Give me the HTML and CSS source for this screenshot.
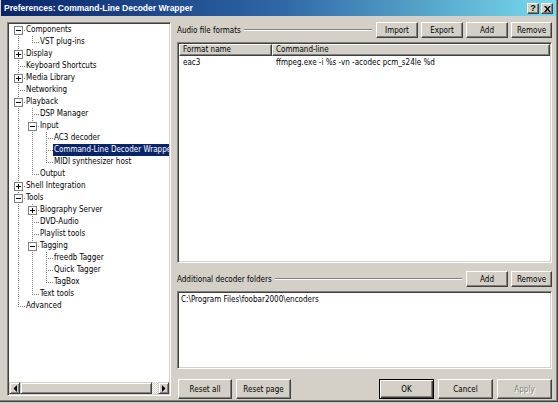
FILE: index.html
```html
<!DOCTYPE html>
<html>
<head>
<meta charset="utf-8">
<link rel="stylesheet" href="styles.css">
</head>
<body>
<div class="window">
  <div class="titlebar">
    <span class="title">Preferences: Command-Line Decoder Wrapper</span>
    <span class="tbtns">
      <span class="tbtn help">?</span>
      <span class="tbtn close"><svg width="7" height="6" viewBox="0 0 7 6"><path d="M0 0h2l1.5 2 1.5-2h2l-2.5 3 2.5 3h-2l-1.5-2-1.5 2h-2l2.5-3z" fill="#000"/></svg></span>
    </span>
  </div>
  <div class="main">
    <div class="tree">
      <div class="tree-items">
        <div class="row"><span class="c first"><span class="box minus"></span></span><span class="lbl">Components</span></div>
        <div class="row"><span class="c pipe"></span><span class="c elbow"></span><span class="lbl">VST plug-ins</span></div>
        <div class="row"><span class="c tee"><span class="box plus"></span></span><span class="lbl">Display</span></div>
        <div class="row"><span class="c tee"></span><span class="lbl">Keyboard Shortcuts</span></div>
        <div class="row"><span class="c tee"><span class="box plus"></span></span><span class="lbl">Media Library</span></div>
        <div class="row"><span class="c tee"></span><span class="lbl">Networking</span></div>
        <div class="row"><span class="c tee"><span class="box minus"></span></span><span class="lbl">Playback</span></div>
        <div class="row"><span class="c pipe"></span><span class="c tee"></span><span class="lbl">DSP Manager</span></div>
        <div class="row"><span class="c pipe"></span><span class="c tee"><span class="box minus"></span></span><span class="lbl">Input</span></div>
        <div class="row"><span class="c pipe"></span><span class="c pipe"></span><span class="c tee"></span><span class="lbl">AC3 decoder</span></div>
        <div class="row"><span class="c pipe"></span><span class="c pipe"></span><span class="c tee"></span><span class="lbl sel">Command-Line Decoder Wrapper</span></div>
        <div class="row"><span class="c pipe"></span><span class="c pipe"></span><span class="c elbow"></span><span class="lbl">MIDI synthesizer host</span></div>
        <div class="row"><span class="c pipe"></span><span class="c elbow"></span><span class="lbl">Output</span></div>
        <div class="row"><span class="c tee"><span class="box plus"></span></span><span class="lbl">Shell Integration</span></div>
        <div class="row"><span class="c tee"><span class="box minus"></span></span><span class="lbl">Tools</span></div>
        <div class="row"><span class="c pipe"></span><span class="c tee"><span class="box plus"></span></span><span class="lbl">Biography Server</span></div>
        <div class="row"><span class="c pipe"></span><span class="c tee"></span><span class="lbl">DVD-Audio</span></div>
        <div class="row"><span class="c pipe"></span><span class="c tee"></span><span class="lbl">Playlist tools</span></div>
        <div class="row"><span class="c pipe"></span><span class="c tee"><span class="box minus"></span></span><span class="lbl">Tagging</span></div>
        <div class="row"><span class="c pipe"></span><span class="c pipe"></span><span class="c tee"></span><span class="lbl">freedb Tagger</span></div>
        <div class="row"><span class="c pipe"></span><span class="c pipe"></span><span class="c tee"></span><span class="lbl">Quick Tagger</span></div>
        <div class="row"><span class="c pipe"></span><span class="c pipe"></span><span class="c elbow"></span><span class="lbl">TagBox</span></div>
        <div class="row"><span class="c pipe"></span><span class="c elbow"></span><span class="lbl">Text tools</span></div>
        <div class="row"><span class="c elbow"></span><span class="lbl">Advanced</span></div>
      </div>
      <div class="hscroll">
        <span class="sbtn"><svg width="4" height="7" viewBox="0 0 4 7"><path d="M4 0v7L0.5 3.5z" fill="#000"/></svg></span>
        <span class="thumb"></span>
        <span class="track"></span>
        <span class="sbtn"><svg width="4" height="7" viewBox="0 0 4 7"><path d="M0 0v7l3.5-3.5z" fill="#000"/></svg></span>
      </div>
    </div>
    <div class="panel">
      <div class="grouprow">
        <span class="glabel">Audio file formats</span>
        <span class="gline"></span>
        <button class="btn w42">Import</button>
        <button class="btn w42">Export</button>
        <button class="btn w42">Add</button>
        <button class="btn w41">Remove</button>
      </div>
      <div class="list formats">
        <div class="lhead">
          <span class="hcell col1">Format name</span>
          <span class="hcell col2">Command-line</span>
        </div>
        <div class="lrow">
          <span class="cell col1">eac3</span>
          <span class="cell col2">ffmpeg.exe -i %s -vn -acodec pcm_s24le %d</span>
        </div>
      </div>
      <div class="grouprow second">
        <span class="glabel">Additional decoder folders</span>
        <span class="gline"></span>
        <button class="btn w42">Add</button>
        <button class="btn w41">Remove</button>
      </div>
      <div class="list folders">
        <div class="frow">C:\Program Files\foobar2000\encoders</div>
      </div>
      <div class="bottom">
        <button class="btn big w54">Reset all</button>
        <button class="btn big w55">Reset page</button>
        <span class="spacer"></span>
        <button class="btn big w55 default">OK</button>
        <button class="btn big w55">Cancel</button>
        <button class="btn big w55 disabled">Apply</button>
      </div>
    </div>
  </div>
</div>
</body>
</html>
```
FILE: styles.css
```css
* { box-sizing: border-box; }
html, body { margin: 0; padding: 0; }
body {
  width: 558px;
  height: 404px;
  overflow: hidden;
  background: #d4d0c8;
  font-family: "DejaVu Sans Condensed", "DejaVu Sans", sans-serif;
  font-size: 8px;
  color: #000;
}
.window {
  width: 558px;
  height: 402px;
  border-right: 1px solid #404040;
  border-bottom: 1px solid #404040;
  box-shadow: inset -1px -1px #808080;
  display: flex;
  flex-direction: column;
}
.titlebar {
  height: 16px;
  margin: 0 1px 0 1px;
  background: linear-gradient(90deg, #0a246a 0%, #2f66a6 50%, #78dcec 100%);
  display: flex;
  align-items: center;
  padding-left: 3px;
  padding-right: 3px;
}
.title {
  color: #fff;
  font-family: "Liberation Sans", Arial, sans-serif;
  font-weight: bold;
  font-size: 8.5px;
  white-space: nowrap;
}
.tbtns { margin-left: auto; display: flex; gap: 2px; padding-top: 1px; }
.tbtn {
  width: 12px;
  height: 11px;
  background: #d4d0c8;
  border: 1px solid;
  border-color: #fff #404040 #404040 #fff;
  box-shadow: inset -1px -1px #808080;
  display: flex;
  align-items: center;
  justify-content: center;
  font-family: "Liberation Sans", Arial, sans-serif;
  font-weight: bold;
  font-size: 9px;
  line-height: 9px;
}
.main {
  flex: 1;
  display: flex;
  padding-top: 6px;
}
.tree {
  width: 164px;
  height: 374px;
  margin-left: 7px;
  background: #fff;
  border: 1px solid;
  border-color: #808080 #fff #fff #808080;
  box-shadow: inset 1px 1px #404040, inset -1px -1px #d4d0c8;
  padding: 1px;
  display: flex;
  flex-direction: column;
}
.tree-items { flex: 1; overflow: hidden; padding-top: 0; }
.row {
  height: 12px;
  display: flex;
  white-space: nowrap;
  padding-left: 2px;
}
.c {
  width: 14px;
  height: 12px;
  flex: none;
  display: flex;
  align-items: flex-start;
  background-repeat: no-repeat;
}
.pipe {
  background-image: repeating-linear-gradient(to bottom, #808080 0 1px, transparent 1px 2px);
  background-size: 1px 12px;
  background-position: 7px 0;
}
.tee {
  background-image: repeating-linear-gradient(to bottom, #808080 0 1px, transparent 1px 2px),
                    repeating-linear-gradient(to right, #808080 0 1px, transparent 1px 2px);
  background-size: 1px 12px, 7px 1px;
  background-position: 7px 0, 7px 6px;
}
.elbow {
  background-image: repeating-linear-gradient(to bottom, #808080 0 1px, transparent 1px 2px),
                    repeating-linear-gradient(to right, #808080 0 1px, transparent 1px 2px);
  background-size: 1px 7px, 7px 1px;
  background-position: 7px 0, 7px 6px;
}
.first {
  background-image: repeating-linear-gradient(to bottom, #808080 0 1px, transparent 1px 2px),
                    repeating-linear-gradient(to right, #808080 0 1px, transparent 1px 2px);
  background-size: 1px 6px, 7px 1px;
  background-position: 7px 6px, 7px 6px;
}
.box {
  width: 9px;
  height: 9px;
  margin: 2px 0 0 3px;
  border: 1px solid #808080;
  background-color: #fff;
  background-repeat: no-repeat;
}
.minus {
  background-image: linear-gradient(#000, #000);
  background-size: 5px 1px;
  background-position: 1px 3px;
}
.plus {
  background-image: linear-gradient(#000, #000), linear-gradient(#000, #000);
  background-size: 5px 1px, 1px 5px;
  background-position: 1px 3px, 3px 1px;
}
.lbl {
  height: 12px;
  line-height: 12px;
  padding: 0 2px 0 1px;
}
.lbl.sel { background: #0a246a; color: #fff; }
.hscroll { height: 12px; display: flex; flex: none; }
.sbtn {
  width: 11px;
  height: 12px;
  flex: none;
  background: #d4d0c8;
  border: 1px solid;
  border-color: #d4d0c8 #404040 #404040 #d4d0c8;
  box-shadow: inset 1px 1px #fff, inset -1px -1px #808080;
  display: flex;
  align-items: center;
  justify-content: center;
}
.thumb {
  width: 132px;
  flex: none;
  background: #d4d0c8;
  border: 1px solid;
  border-color: #d4d0c8 #404040 #404040 #d4d0c8;
  box-shadow: inset 1px 1px #fff, inset -1px -1px #808080;
}
.track {
  flex: 1;
  background: repeating-conic-gradient(#fff 0 25%, #d4d0c8 0 50%) 0 0 / 2px 2px;
}
.panel {
  width: 375px;
  margin-left: 6px;
  display: flex;
  flex-direction: column;
}
.grouprow {
  height: 16px;
  display: flex;
  align-items: center;
  gap: 3px;
}
.grouprow.second { margin-top: 8px; }
.glabel { white-space: nowrap; }
.gline {
  flex: 1;
  height: 2px;
  border-top: 1px solid #808080;
  border-bottom: 1px solid #fff;
  margin: 0 1px 0 0;
}
.btn {
  height: 16px;
  padding: 0;
  margin: 0;
  font-family: inherit;
  font-size: inherit;
  color: #000;
  background: #d4d0c8;
  border: 1px solid;
  border-color: #fff #404040 #404040 #fff;
  box-shadow: inset -1px -1px #808080;
  flex: none;
}
.btn.big { height: 20px; }
.w41 { width: 41px; }
.w42 { width: 42px; }
.w54 { width: 54px; }
.w55 { width: 55px; }
.btn.default {
  border-color: #000;
  box-shadow: inset 1px 1px #fff, inset -1px -1px #404040, inset -2px -2px #808080;
}
.btn.disabled { color: #808080; text-shadow: 1px 1px #fff; }
.list {
  background: #fff;
  border: 1px solid;
  border-color: #808080 #fff #fff #808080;
  box-shadow: inset 1px 1px #404040, inset -1px -1px #d4d0c8;
  padding: 1px;
}
.formats { height: 221px; margin-top: 4px; }
.folders { height: 78px; margin-top: 4px; }
.lhead { display: flex; height: 12px; }
.hcell {
  height: 12px;
  line-height: 10px;
  padding-left: 3px;
  background: #d4d0c8;
  border: 1px solid;
  border-color: #fff #404040 #404040 #fff;
  box-shadow: inset -1px -1px #808080;
  white-space: nowrap;
}
.hcell.col1 { width: 93px; }
.hcell.col2 { flex: 1; }
.lrow { display: flex; height: 12px; line-height: 12px; margin-top: 1px; }
.cell { white-space: nowrap; }
.cell.col1 { width: 93px; padding-left: 4px; }
.cell.col2 { padding-left: 4px; }
.frow { line-height: 12px; padding-left: 2px; margin-top: 1px; }
.bottom {
  display: flex;
  margin-top: 10px;
  gap: 4px;
  padding-left: 1px;
}
.spacer { flex: 1; }
```
